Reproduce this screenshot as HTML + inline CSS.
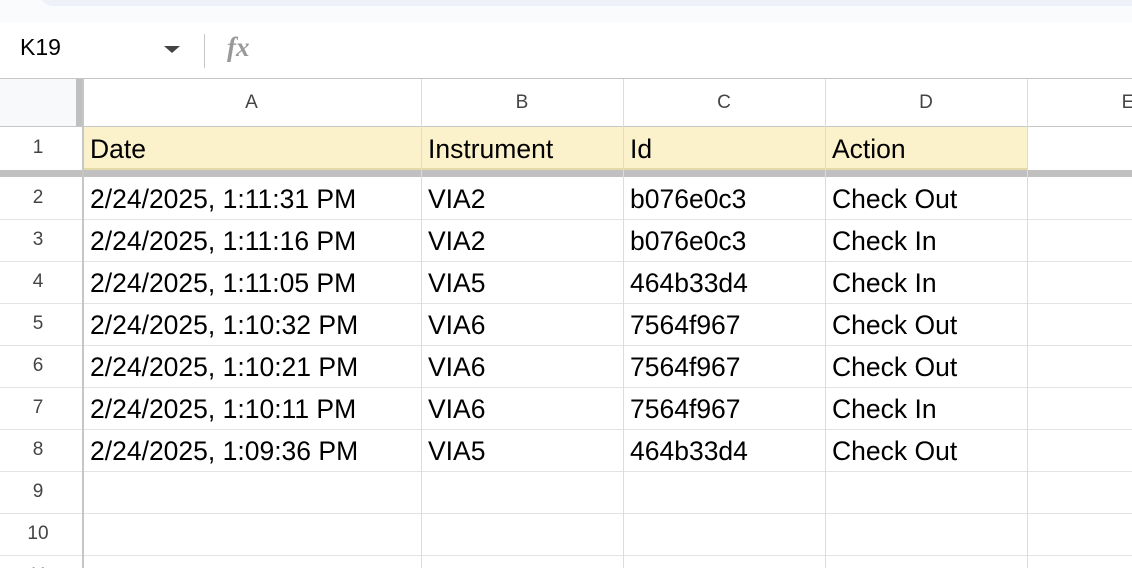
<!DOCTYPE html>
<html style="width:1132px;height:568px;overflow:hidden"><head><style>
*{margin:0;padding:0;box-sizing:border-box}
body{width:1132px;height:568px;overflow:hidden;background:#fff;font-family:"Liberation Sans",Arial,sans-serif}
#w{position:relative;width:1132px;height:568px;overflow:hidden}
.a{position:absolute}
.c{position:absolute;font-size:26.5px;color:#000;line-height:44px;padding-left:7px;white-space:nowrap}
.h{position:absolute;font-size:19px;color:#444;text-align:center;line-height:48px}
.rn{position:absolute;left:0;width:76px;text-align:center;font-size:19px;color:#444;line-height:42px;height:42px;overflow:hidden}
.hl{position:absolute;left:0;width:1132px;height:1px;background:#e2e3e3}
.vl{position:absolute;width:1px;background:#dcdcdc}
</style></head><body><div id="w">
<div class="a" style="left:0;top:0;width:1132px;height:22px;background:#f9fbfd"></div>
<div class="a" style="left:40px;top:-20px;width:1092px;height:26px;background:#eef1f7;border-radius:20px 0 0 20px"></div>
<div class="a" style="left:20px;top:34px;font-size:23px;color:#000">K19</div>
<div class="a" style="left:164px;top:46px;width:0;height:0;border-left:8px solid transparent;border-right:8px solid transparent;border-top:7px solid #444"></div>
<div class="a" style="left:204px;top:34px;width:1px;height:34px;background:#c7c7c7"></div>
<div class="a" style="left:227px;top:32px;font-size:27px;color:#999;font-weight:bold;font-family:'Liberation Serif',serif;font-style:italic">fx</div>
<div class="a" style="left:0;top:78px;width:1132px;height:1px;background:#c4c7c5"></div>
<div class="a" style="left:0;top:79px;width:76px;height:48px;background:#f8f9fa"></div>
<div class="a" style="left:76px;top:79px;width:6px;height:48px;background:#c0c0c0"></div>
<div class="a" style="left:82px;top:126px;width:1050px;height:1px;background:#c4c7c5"></div>
<div class="a" style="left:0;top:126px;width:82px;height:1px;background:#c4c7c5"></div>
<div class="h" style="left:82px;top:79px;width:339px">A</div>
<div class="h" style="left:421px;top:79px;width:202px">B</div>
<div class="h" style="left:623px;top:79px;width:202px">C</div>
<div class="h" style="left:825px;top:79px;width:202px">D</div>
<div class="h" style="left:1027px;top:79px;width:202px">E</div>
<div class="a" style="left:83px;top:127px;width:944px;height:42px;background:#fbf1cb"></div>
<div class="a" style="left:83px;top:168px;width:944px;height:2px;background:#e4d9a8"></div>
<div class="a" style="left:0;top:170px;width:1132px;height:7px;background:#c0c0c0"></div>
<div class="hl" style="top:219px"></div><div class="hl" style="top:261px"></div><div class="hl" style="top:303px"></div><div class="hl" style="top:345px"></div><div class="hl" style="top:387px"></div><div class="hl" style="top:429px"></div><div class="hl" style="top:471px"></div><div class="hl" style="top:513px"></div><div class="hl" style="top:555px"></div>
<div class="a" style="left:82px;top:79px;width:2px;height:489px;background:#c4c7c5"></div>
<div class="vl" style="left:421px;top:79px;height:489px"></div>
<div class="vl" style="left:623px;top:79px;height:489px"></div>
<div class="vl" style="left:825px;top:79px;height:489px"></div>
<div class="vl" style="left:1027px;top:79px;height:489px"></div>
<div class="rn" style="top:127px">1</div>
<div class="rn" style="top:177px">2</div><div class="rn" style="top:219px">3</div><div class="rn" style="top:261px">4</div><div class="rn" style="top:303px">5</div><div class="rn" style="top:345px">6</div><div class="rn" style="top:387px">7</div><div class="rn" style="top:429px">8</div><div class="rn" style="top:471px">9</div><div class="rn" style="top:513px">10</div><div class="rn" style="top:555px;height:13px">11</div>
<div class="c" style="left:83px;top:127px">Date</div><div class="c" style="left:421px;top:127px">Instrument</div><div class="c" style="left:623px;top:127px">Id</div><div class="c" style="left:825px;top:127px">Action</div>
<div class="c" style="left:83px;top:177px">2/24/2025, 1:11:31 PM</div><div class="c" style="left:421px;top:177px">VIA2</div><div class="c" style="left:623px;top:177px">b076e0c3</div><div class="c" style="left:825px;top:177px">Check Out</div>
<div class="c" style="left:83px;top:219px">2/24/2025, 1:11:16 PM</div><div class="c" style="left:421px;top:219px">VIA2</div><div class="c" style="left:623px;top:219px">b076e0c3</div><div class="c" style="left:825px;top:219px">Check In</div>
<div class="c" style="left:83px;top:261px">2/24/2025, 1:11:05 PM</div><div class="c" style="left:421px;top:261px">VIA5</div><div class="c" style="left:623px;top:261px">464b33d4</div><div class="c" style="left:825px;top:261px">Check In</div>
<div class="c" style="left:83px;top:303px">2/24/2025, 1:10:32 PM</div><div class="c" style="left:421px;top:303px">VIA6</div><div class="c" style="left:623px;top:303px">7564f967</div><div class="c" style="left:825px;top:303px">Check Out</div>
<div class="c" style="left:83px;top:345px">2/24/2025, 1:10:21 PM</div><div class="c" style="left:421px;top:345px">VIA6</div><div class="c" style="left:623px;top:345px">7564f967</div><div class="c" style="left:825px;top:345px">Check Out</div>
<div class="c" style="left:83px;top:387px">2/24/2025, 1:10:11 PM</div><div class="c" style="left:421px;top:387px">VIA6</div><div class="c" style="left:623px;top:387px">7564f967</div><div class="c" style="left:825px;top:387px">Check In</div>
<div class="c" style="left:83px;top:429px">2/24/2025, 1:09:36 PM</div><div class="c" style="left:421px;top:429px">VIA5</div><div class="c" style="left:623px;top:429px">464b33d4</div><div class="c" style="left:825px;top:429px">Check Out</div>
</div></body></html>
